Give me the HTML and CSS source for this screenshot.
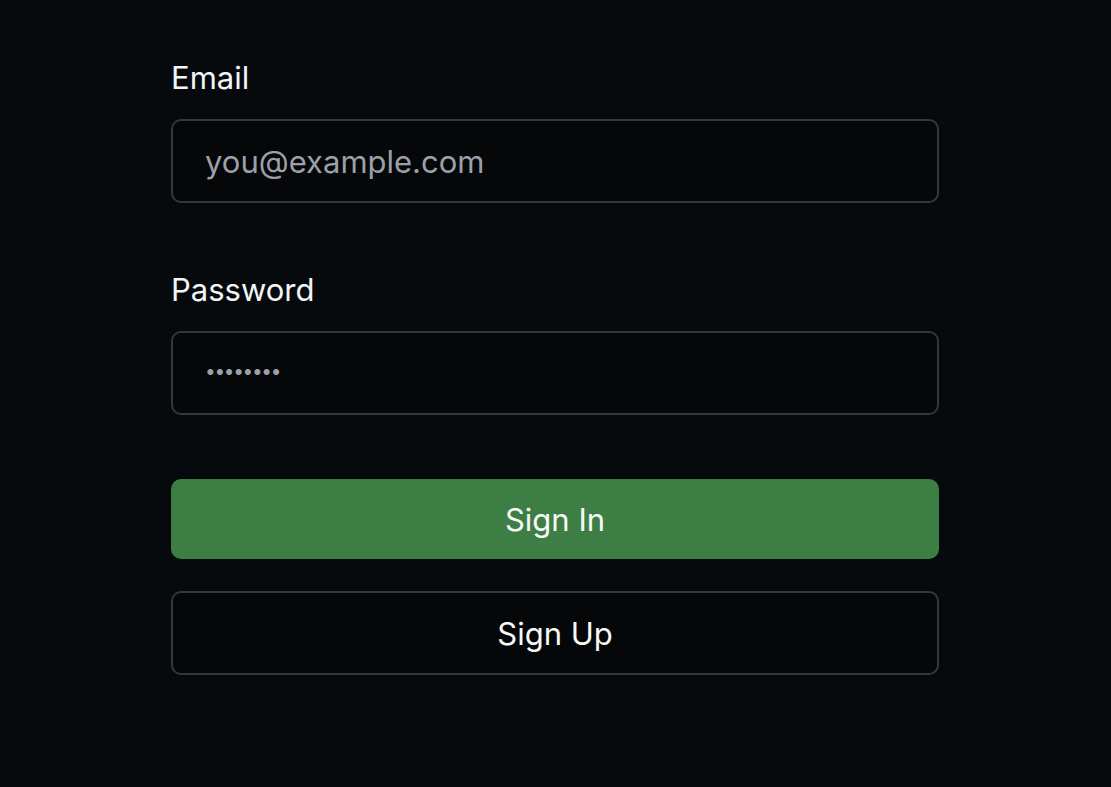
FILE: index.html
```html
<!DOCTYPE html>
<html lang="en">
<head>
<meta charset="utf-8">
<title>Sign In</title>
<link rel="stylesheet" href="styles.css">
</head>
<body>
<form class="auth-form">
  <div class="field field-email">
    <label class="field-label" for="email">Email</label>
    <input class="field-input" id="email" type="email" placeholder="you@example.com">
  </div>
  <div class="field field-password">
    <label class="field-label" for="password">Password</label>
    <input class="field-input field-input-secret" id="password" type="password" placeholder="••••••••">
  </div>
  <div class="actions">
    <button type="button" class="btn btn-primary">Sign In</button>
    <button type="button" class="btn btn-outline">Sign Up</button>
  </div>
</form>
</body>
</html>
```
FILE: styles.css
```css
html, body {
  margin: 0;
  padding: 0;
  background: #060a0d;
}
body {
  font-family: Inter, "Noto Sans", sans-serif;
  color: #f4f5f6;
  min-height: 787px;
}
.auth-form {
  width: 768px;
  margin-left: 171px;
  padding-top: 60px;
  display: flex;
  flex-direction: column;
}
.field {
  display: flex;
  flex-direction: column;
  gap: 23px;
}
.field-password {
  margin-top: 69px;
}
.field-label {
  font-size: 31px;
  line-height: 36px;
  font-weight: 400;
  color: #f4f5f6;
}
.field-input {
  box-sizing: border-box;
  height: 84px;
  width: 100%;
  margin: 0;
  padding: 0 32px;
  border: 2px solid #34373c;
  border-radius: 10px;
  background: #050709;
  color: #f4f5f6;
  font-family: Inter, "Noto Sans", sans-serif;
  font-size: 31px;
  outline: none;
}
.field-input::placeholder {
  color: #9ca0a9;
  opacity: 1;
}
.field-input-secret {
  font-size: 19px;
  letter-spacing: -1.3px;
  padding-bottom: 3px;
}
.actions {
  margin-top: 64px;
  display: flex;
  flex-direction: column;
  gap: 32px;
}
.btn {
  box-sizing: border-box;
  width: 100%;
  margin: 0;
  border-radius: 10px;
  font-family: Inter, "Noto Sans", sans-serif;
  font-size: 31px;
  font-weight: 400;
  color: #f7f8f8;
  cursor: pointer;
}
.btn-primary {
  height: 80px;
  border: none;
  background: #3d7e45;
}
.btn-outline {
  height: 84px;
  border: 2px solid #34373c;
  background: #050709;
}
```
